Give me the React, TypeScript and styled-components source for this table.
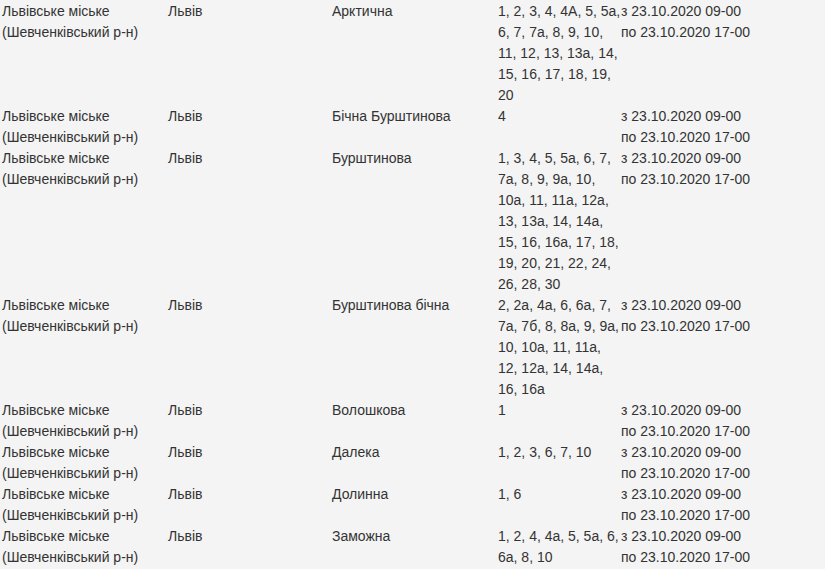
import { createGlobalStyle } from 'styled-components'
import styled from 'styled-components'

type Outage = {
  street: string
  houses: string
}

const outages: Outage[] = [
  {
    street: 'Арктична',
    houses: '1, 2, 3, 4, 4А, 5, 5а, 6, 7, 7а, 8, 9, 10, 11, 12, 13, 13а, 14, 15, 16, 17, 18, 19, 20',
  },
  { street: 'Бічна Бурштинова', houses: '4' },
  {
    street: 'Бурштинова',
    houses:
      '1, 3, 4, 5, 5а, 6, 7, 7а, 8, 9, 9а, 10, 10а, 11, 11а, 12а, 13, 13а, 14, 14а, 15, 16, 16а, 17, 18, 19, 20, 21, 22, 24, 26, 28, 30',
  },
  {
    street: 'Бурштинова бічна',
    houses: '2, 2а, 4а, 6, 6а, 7, 7а, 7б, 8, 8а, 9, 9а, 10, 10а, 11, 11а, 12, 12а, 14, 14а, 16, 16а',
  },
  { street: 'Волошкова', houses: '1' },
  { street: 'Далека', houses: '1, 2, 3, 6, 7, 10' },
  { street: 'Долинна', houses: '1, 6' },
  { street: 'Заможна', houses: '1, 2, 4, 4а, 5, 5а, 6, 6а, 8, 10' },
]

const GlobalStyle = createGlobalStyle`
  html, body {
    margin: 0;
    padding: 0;
    background: #f4f4f4;
  }
`

const Table = styled.table`
  border-collapse: collapse;
  table-layout: fixed;
  margin: 1px 0 0 2px;
  font-family: 'Liberation Sans', Arial, sans-serif;
  font-size: 14px;
  line-height: 21px;
  color: #333;
`

const Cell = styled.td<{ $width: number }>`
  width: ${(p) => p.$width}px;
  padding: 0;
  vertical-align: top;
  text-align: left;
`

const period = 'з 23.10.2020 09-00 по 23.10.2020 17-00'

export default function App() {
  return (
    <>
      <GlobalStyle />
      <Table>
        <tbody>
          {outages.map((o) => (
            <tr key={o.street}>
              <Cell $width={166}>Львівське міське (Шевченківський р-н)</Cell>
              <Cell $width={164}>Львів</Cell>
              <Cell $width={166}>{o.street}</Cell>
              <Cell $width={123}>{o.houses}</Cell>
              <Cell $width={132}>{period}</Cell>
            </tr>
          ))}
        </tbody>
      </Table>
    </>
  )
}
